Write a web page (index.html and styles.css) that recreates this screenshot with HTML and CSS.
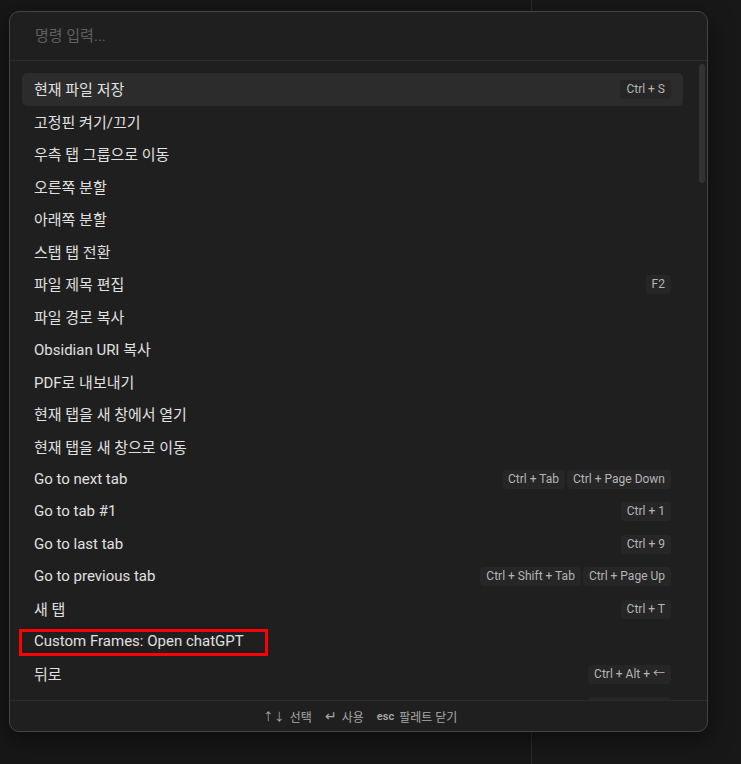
FILE: index.html
```html
<!DOCTYPE html>
<html lang="ko">
<head>
    <meta charset="UTF-8">
    <meta name="viewport" content="width=device-width, initial-scale=1.0">
    <title>명령 팔레트</title>
    <link rel="stylesheet" href="styles.css">
</head>
<body>
    <div class="workspace">
        <div class="pane-left"></div>
        <div class="pane-right"></div>
    </div>

    <div class="prompt">
        <div class="prompt-input">
            <input type="text" placeholder="명령 입력...">
        </div>

        <div class="prompt-results">
            <div class="suggestion is-selected">
                <span class="title">현재 파일 저장</span>
                <span class="hotkeys"><kbd>Ctrl + S</kbd></span>
            </div>
            <div class="suggestion"><span class="title">고정핀 켜기/끄기</span></div>
            <div class="suggestion"><span class="title">우측 탭 그룹으로 이동</span></div>
            <div class="suggestion"><span class="title">오른쪽 분할</span></div>
            <div class="suggestion"><span class="title">아래쪽 분할</span></div>
            <div class="suggestion"><span class="title">스탭 탭 전환</span></div>
            <div class="suggestion">
                <span class="title">파일 제목 편집</span>
                <span class="hotkeys"><kbd>F2</kbd></span>
            </div>
            <div class="suggestion"><span class="title">파일 경로 복사</span></div>
            <div class="suggestion"><span class="title">Obsidian URI 복사</span></div>
            <div class="suggestion"><span class="title">PDF로 내보내기</span></div>
            <div class="suggestion"><span class="title">현재 탭을 새 창에서 열기</span></div>
            <div class="suggestion"><span class="title">현재 탭을 새 창으로 이동</span></div>
            <div class="suggestion">
                <span class="title">Go to next tab</span>
                <span class="hotkeys"><kbd>Ctrl + Tab</kbd><kbd>Ctrl + Page Down</kbd></span>
            </div>
            <div class="suggestion">
                <span class="title">Go to tab #1</span>
                <span class="hotkeys"><kbd>Ctrl + 1</kbd></span>
            </div>
            <div class="suggestion">
                <span class="title">Go to last tab</span>
                <span class="hotkeys"><kbd>Ctrl + 9</kbd></span>
            </div>
            <div class="suggestion">
                <span class="title">Go to previous tab</span>
                <span class="hotkeys"><kbd>Ctrl + Shift + Tab</kbd><kbd>Ctrl + Page Up</kbd></span>
            </div>
            <div class="suggestion">
                <span class="title">새 탭</span>
                <span class="hotkeys"><kbd>Ctrl + T</kbd></span>
            </div>
            <div class="suggestion">
                <span class="title">Custom Frames: Open chatGPT</span>
                <span class="mark"></span>
            </div>
            <div class="suggestion">
                <span class="title">뒤로</span>
                <span class="hotkeys"><kbd>Ctrl + Alt + ←</kbd></span>
            </div>
            <div class="suggestion">
                <span class="title">앞으로</span>
                <span class="hotkeys"><kbd>Ctrl + Alt + →</kbd></span>
            </div>

            <div class="scroll-thumb"></div>
        </div>

        <div class="prompt-instructions">
            <div class="instruction"><span class="cmd">↑↓</span><span>선택</span></div>
            <div class="instruction"><span class="cmd enter">↵</span><span>사용</span></div>
            <div class="instruction"><span class="cmd esc">esc</span><span>팔레트 닫기</span></div>
        </div>
    </div>
</body>
</html>
```

FILE: styles.css
```css
body {
    margin: 0;
    padding: 0;
    background: #161616;
    font-family: Roboto, "Noto Sans CJK KR", sans-serif;
    overflow: hidden;
}
.workspace {
    display: flex;
    height: 100vh;
}
.pane-left {
    width: 531px;
    border-right: 1px solid #2a2a2a;
    background: #171717;
}
.pane-right {
    flex: 1;
    background: #181818;
}

/* Command palette */
.prompt {
    position: absolute;
    left: 9px;
    top: 11px;
    width: 697px;
    height: 719px;
    background: #1f1f1f;
    border: 1px solid #454545;
    border-radius: 10px;
    box-shadow: 0 6px 24px rgba(0, 0, 0, 0.5);
    display: flex;
    flex-direction: column;
    overflow: hidden;
}
.prompt-input {
    height: 48px;
    border-bottom: 1px solid #2c2c2c;
    display: flex;
    align-items: center;
    padding: 0 25px;
}
.prompt-input input {
    flex: 1;
    background: transparent;
    border: none;
    outline: none;
    color: #dadada;
    font-family: inherit;
    font-size: 15px;
    padding: 0;
}
.prompt-input input::placeholder {
    color: #5f5f5f;
}

.prompt-results {
    position: relative;
    height: 627px;
    padding: 12px 24px 0 12px;
    overflow: hidden;
}
.suggestion {
    position: relative;
    height: 32.5px;
    display: flex;
    align-items: center;
    justify-content: space-between;
    padding: 0 12px;
    border-radius: 5px;
    color: #e0e0e0;
    font-size: 15px;
}
.suggestion.is-selected {
    background: #2c2c2c;
}
.title {
    margin-top: -1px;
}
.hotkeys {
    display: flex;
    gap: 2px;
}
kbd {
    font-family: inherit;
    font-size: 12px;
    color: #b5b5b5;
    background: #262626;
    border-radius: 4px;
    padding: 0 6px;
    height: 19px;
    line-height: 19px;
}
.mark {
    position: absolute;
    left: -3px;
    top: 3px;
    width: 243px;
    height: 21px;
    border: 3px solid #ff0000;
}
.scroll-thumb {
    position: absolute;
    right: 2px;
    top: 3px;
    width: 6px;
    height: 119px;
    border-radius: 3px;
    background: #333333;
}

.prompt-instructions {
    flex: 1;
    border-top: 1px solid #2c2c2c;
    display: flex;
    justify-content: center;
    align-items: center;
    gap: 13px;
    font-size: 12px;
    color: #a8a8a8;
    padding-left: 3px;
}
.instruction {
    display: flex;
    align-items: center;
    gap: 5px;
}
.cmd {
    font-size: 11px;
}
.cmd.enter {
    font-size: 14px;
    line-height: 1;
}
.cmd.esc {
    font-weight: 600;
}
```
